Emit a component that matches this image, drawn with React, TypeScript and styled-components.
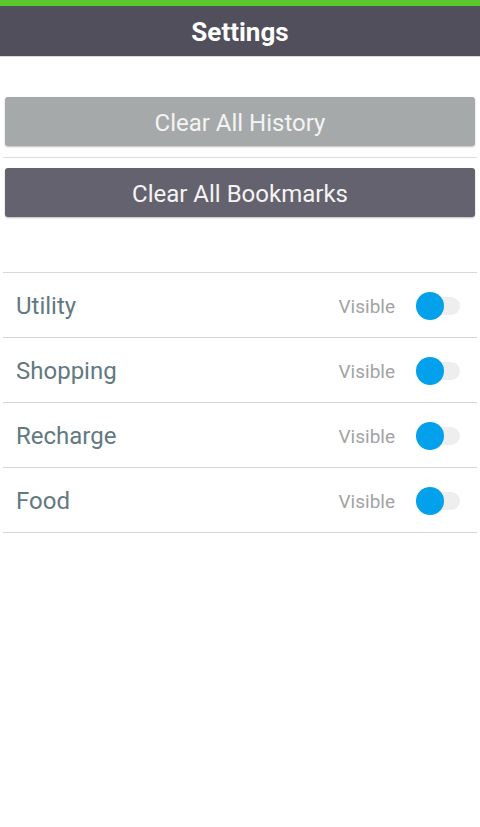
import React, { useState } from 'react'
import styled, { createGlobalStyle } from 'styled-components'

const GlobalStyle = createGlobalStyle`
  html, body {
    margin: 0;
    padding: 0;
    background: #ffffff;
    font-family: Roboto, 'Noto Sans', sans-serif;
  }
`

const Page = styled.div`
  width: 480px;
  min-height: 827px;
  background: #ffffff;
`

const StatusStrip = styled.div`
  height: 6px;
  background: #5bc72f;
`

const Header = styled.header`
  height: 51px;
  padding-top: 2px;
  box-sizing: border-box;
  background: #504f5b;
  border-bottom: 1px solid #d8d8d8;
  display: flex;
  align-items: center;
  justify-content: center;
`

const Title = styled.h1`
  margin: 0;
  font-size: 26px;
  font-weight: 700;
  color: #ffffff;
`

const Actions = styled.div`
  padding: 40px 5px 0;
  display: flex;
  flex-direction: column;
`

const ActionButton = styled.button<{ $tone: string }>`
  height: 49px;
  width: 100%;
  border: none;
  border-radius: 3px;
  background: ${(p) => p.$tone};
  color: #f4f4f4;
  font-family: Roboto, 'Noto Sans', sans-serif;
  font-size: 24px;
  font-weight: 400;
  padding: 2px 0 0;
  box-shadow: 0 1px 2px rgba(0, 0, 0, 0.25);
  cursor: pointer;
`

const Divider = styled.div`
  height: 1px;
  margin: 11px -2px 10px;
  background: #dcdcdc;
`

const List = styled.ul`
  list-style: none;
  margin: 55px 3px 0;
  padding: 0;
  border-top: 1px solid #d6d6d6;
`

const Row = styled.li`
  height: 65px;
  box-sizing: border-box;
  border-bottom: 1px solid #d6d6d6;
  display: flex;
  align-items: center;
  padding: 2px 17px 0 13px;
`

const Label = styled.span`
  flex: 1;
  font-size: 24px;
  color: #62797f;
`

const State = styled.span`
  font-size: 19px;
  color: #a3a3a3;
  margin-right: 21px;
`

const Track = styled.button`
  position: relative;
  width: 44px;
  height: 28px;
  padding: 0;
  border: none;
  background: transparent;
  cursor: pointer;

  &::before {
    content: '';
    position: absolute;
    left: 8px;
    right: 0;
    top: 5px;
    height: 18px;
    border-radius: 9px;
    background: #eeeeee;
  }
`

const Knob = styled.span<{ $on: boolean }>`
  position: absolute;
  top: 0;
  left: ${(p) => (p.$on ? '0' : '16px')};
  width: 28px;
  height: 28px;
  border-radius: 50%;
  background: ${(p) => (p.$on ? '#03a0ec' : '#fafafa')};
`

const categories = ['Utility', 'Shopping', 'Recharge', 'Food']

export default function App() {
  const [visible, setVisible] = useState<Record<string, boolean>>({
    Utility: true,
    Shopping: true,
    Recharge: true,
    Food: true,
  })

  const toggle = (name: string) =>
    setVisible((v) => ({ ...v, [name]: !v[name] }))

  return (
    <Page>
      <GlobalStyle />
      <StatusStrip />
      <Header>
        <Title>Settings</Title>
      </Header>
      <Actions>
        <ActionButton $tone="#a5a9aa">Clear All History</ActionButton>
        <Divider />
        <ActionButton $tone="#64626e">Clear All Bookmarks</ActionButton>
      </Actions>
      <List>
        {categories.map((name) => (
          <Row key={name}>
            <Label>{name}</Label>
            <State>Visible</State>
            <Track onClick={() => toggle(name)}>
              <Knob $on={visible[name]} />
            </Track>
          </Row>
        ))}
      </List>
    </Page>
  )
}
